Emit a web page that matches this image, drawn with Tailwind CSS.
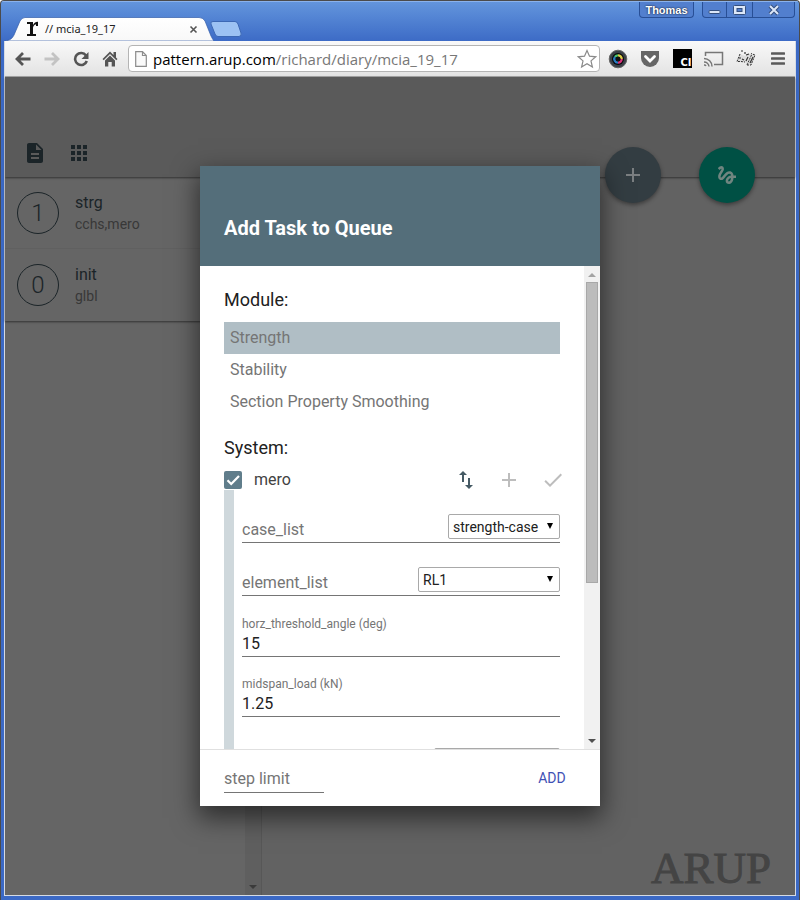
<!DOCTYPE html>
<html lang="en">
<head>
<meta charset="utf-8">
<title>// mcia_19_17</title>
<script src="https://cdn.jsdelivr.net/npm/@tailwindcss/browser@4"></script>
</head>
<body class="font-[Roboto,sans-serif]">
<div class="flex h-screen flex-col overflow-hidden rounded-t border-x border-t border-[#4b4b4b] bg-linear-to-b from-[#6496dd] to-[#3b69c5] to-[42px]">

  <!-- Title bar -->
  <header class="relative flex h-10 shrink-0 items-start justify-between border-t border-[#8ab2ec] pl-1">
    <div class="flex pt-[15px]">
      <div class="relative flex h-6 w-[209px] items-center gap-[6px] pr-4 pl-[21px]">
        <svg class="absolute inset-0" width="209" height="24" viewBox="0 0 209 24"><defs><linearGradient id="tab" x2="0" y2="1"><stop stop-color="#fff"/><stop offset="1" stop-color="#f8f8f8"/></linearGradient></defs><path d="M0 24C5 23 7 22 9 18L15 4Q17 .5 20 .5H194Q198 .5 200 4L206 19Q208 23 209 24Z" fill="url(#tab)" stroke="#345da9" stroke-width=".7"/></svg>
        <svg class="relative shrink-0" width="13" height="16" viewBox="0 0 13 16"><path d="M1 1h6v3C8 2 9 .7 12 .7V5H10V3.2C8.500 3.500 7 5 7 7v6h3v2H1v-2h3V3H1Z" fill="#111"/></svg>
        <span class="relative flex-1 font-['Noto_Sans',sans-serif] text-[11px] leading-4 whitespace-nowrap text-[#222]">// mcia_19_17</span>
        <button aria-label="Close tab" class="relative"><svg width="9" height="9" viewBox="0 0 9 9"><path d="M1.500 1.500l6 6M7.500 1.500l-6 6" stroke="#555" stroke-width="1.600"/></svg></button>
      </div>
      <button aria-label="New tab" class="mt-1 -ml-1 h-4"><svg width="32" height="16" viewBox="0 0 32 16"><path d="M3 .5H25Q27 .5 28 3L31 12Q32 15 29 15.500H8Q6 15.500 5 13L1 3Q0 .5 3 .5Z" fill="#9cc2f3" stroke="#3c68b4"/></svg></button>
    </div>
    <div class="flex h-4 gap-2 pr-1 text-white">
      <button class="w-[55px] rounded-b border border-t-0 border-[#284f96] bg-[#527fce] font-['Liberation_Sans',sans-serif] text-[11px] leading-4 font-bold text-white text-shadow-[0_0_2px_#000]">Thomas</button>
      <div class="flex rounded-b border border-t-0 border-[#284f96] bg-[#527fce]">
        <button aria-label="Minimize" class="grid w-6 place-items-center border-r border-[#284f96]"><svg width="13" height="14" viewBox="0 0 13 14"><rect x="1" y="7.500" width="11" height="3" rx="1" fill="#dce7f8" stroke="#35507f"/></svg></button>
        <button aria-label="Maximize" class="grid w-[26px] place-items-center border-r border-[#284f96]"><svg width="13" height="12" viewBox="0 0 13 12"><rect x=".5" y="1.500" width="12" height="9" rx="1" fill="#dce7f8" stroke="#35507f"/><rect x="4" y="4.500" width="5" height="3" fill="#527fce" stroke="#35507f"/></svg></button>
        <button aria-label="Close" class="grid w-[41px] place-items-center"><svg width="12" height="12" viewBox="0 0 12 12"><path d="M2 2l8 8M10 2l-8 8" stroke="#35507f" stroke-width="4"/><path d="M2 2l8 8M10 2l-8 8" stroke="#dce7f8" stroke-width="2"/></svg></button>
      </div>
    </div>
  </header>

  <div class="mx-[3px] mb-1 flex min-h-0 flex-1 flex-col border-x border-b border-[#d5dbe4]">
    <!-- Browser toolbar -->
    <nav class="flex h-9 shrink-0 items-center border-b border-[#a5a5a5] bg-linear-to-b from-[#f9f9f9] to-[#e3e3e3] pl-[3px]">
      <button aria-label="Back" class="grid w-[29px] place-items-center"><svg width="18" height="16" viewBox="0 0 18 16"><path d="M16.500 8H3M9 2L3 8l6 6" fill="none" stroke="#555" stroke-width="2.800"/></svg></button>
      <button aria-label="Forward" class="grid w-[29px] place-items-center"><svg width="18" height="16" viewBox="0 0 18 16"><path d="M1.500 8H15M9 2l6 6-6 6" fill="none" stroke="#c3c3c3" stroke-width="2.800"/></svg></button>
      <button aria-label="Reload" class="grid w-[29px] place-items-center"><svg width="16" height="16" viewBox="0 0 16 16"><path d="M13 4.500A6 6 0 1 0 13.800 10" fill="none" stroke="#555" stroke-width="2.600"/><path d="M15.500 1v7H8.500Z" fill="#555"/></svg></button>
      <button aria-label="Home" class="grid w-[29px] place-items-center"><svg width="16" height="16" viewBox="0 0 16 16"><path d="M8 .5L.5 8l1.200 1.200L8 3l6.300 6.200 1.200-1.200L14 6.500V1h-2.500v3Z M3 9.500l5-5 5 5v6H9.700V11H6.300v4.500H3Z" fill="#555"/></svg></button>
      <div class="ml-1 flex h-[27px] min-w-0 flex-1 items-center gap-[6px] rounded-sm border border-[#b4b4b4] bg-white px-[6px]">
        <svg class="shrink-0" width="12" height="16" viewBox="0 0 12 16"><path d="M.7.7H7.500L11.300 4.500V15.300H.7ZM7.500.7V4.500h3.800" fill="#fafafa" stroke="#8c8c8c" stroke-width="1.200"/></svg>
        <span class="flex-1 overflow-hidden font-['Open_Sans',sans-serif] text-[15px] leading-6 whitespace-nowrap text-[#777]"><span class="text-black">pattern.arup.com</span>/richard/diary/mcia_19_17</span>
        <button aria-label="Bookmark"><svg class="-mr-1" width="20" height="20" viewBox="0 0 20 20"><path d="M10 1.500l2.500 5.700 6.200.6-4.700 4.100 1.400 6.100L10 14.800 4.600 18 6 11.900 1.300 7.800l6.200-.6Z" fill="#fff" stroke="#8a8a8a" stroke-width="1.200"/></svg></button>
      </div>
      <div class="ml-[2px] flex pr-px">
        <button aria-label="Camera" class="grid w-8 place-items-center"><svg width="20" height="20" viewBox="0 0 20 20"><circle cx="10" cy="10" r="8.800" fill="#3b4148" stroke="#666"/><circle cx="10" cy="10" r="6" fill="#080808"/><g fill="none" stroke-width="2.500"><path d="M7 8A3.600 3.600 0 0 1 10 6.400" stroke="#4bc56b"/><path d="M10 6.400A3.600 3.600 0 0 1 13.600 10" stroke="#ded04a"/><path d="M13.600 10A3.600 3.600 0 0 1 10 13.600" stroke="#db337d"/><path d="M10 13.600A3.600 3.600 0 0 1 7 8" stroke="#287cc5"/></g><circle cx="10" cy="10" r="2.500" fill="#111"/></svg></button>
        <button aria-label="Pocket" class="grid w-8 place-items-center"><svg width="20" height="18" viewBox="0 0 20 18"><path d="M1 1H19V8A9 9 0 0 1 1 8Z" fill="#666"/><path d="M5.500 6.500L10 11l4.500-4.500" fill="none" stroke="#fff" stroke-width="2.800" stroke-linecap="round"/></svg></button>
        <button aria-label="CI" class="grid w-8 place-items-center"><span class="flex h-[19px] w-[19px] items-end justify-end overflow-hidden bg-black font-['DejaVu_Sans',sans-serif] text-[10px] leading-[11px] font-bold text-white">CI</span></button>
        <button aria-label="Cast" class="grid w-8 place-items-center"><svg width="20" height="16" viewBox="0 0 20 16"><path d="M1.500 5V1.500H18.500V13.500H10" fill="none" stroke="#777" stroke-width="1.500"/><path d="M0 14a2 2 0 0 1 2 1M0 11a5 5 0 0 1 5 4.500M0 7.500A8 8 0 0 1 8 15.500" fill="none" stroke="#777" stroke-width="1.500"/></svg></button>
        <button aria-label="Notes" class="grid w-8 place-items-center"><svg width="20" height="18" viewBox="0 0 20 18"><path d="M4 4L1 11.500l5.500-.5L9 12l2 3h4L19 5l-4-1.500-4 1L9 6 6 5Z" fill="#dcdcdc"/><path d="M4 4L1 11.500h4l4 .5M11 15l4.500-10M11 15h4L19 5l-4-1.500" fill="none" stroke="#333" stroke-dasharray="2 1"/><path d="M5 1h2M9 2v2M10 5l3-1M3 8h2M6 9l2 1M10 11l2-4M14 13l3-6" fill="none" stroke="#333" stroke-width="1.200"/></svg></button>
        <button aria-label="Menu" class="grid w-8 place-items-center"><svg width="14" height="13" viewBox="0 0 14 13"><path d="M1 1.500H13M1 6.500H13M1 11.500H13" stroke="#5a5a5a" stroke-width="2.600" stroke-linecap="round"/></svg></button>
      </div>
    </nav>

    <!-- Dimmed page with the modal on top -->
    <div class="relative flex min-h-0 flex-1 flex-col bg-[#626262]">
      <header class="relative z-10 flex items-end gap-1 bg-[#5a5a5a] pt-14 pb-1 pl-[10px] shadow-[0_1px_2px_rgba(0,0,0,0.5)]">
        <button aria-label="Document" class="grid size-10 place-items-center"><svg width="24" height="24" viewBox="0 0 24 24" fill="#1b2428"><path d="M14 2H6c-1.100 0-1.990.9-1.990 2L4 20c0 1.100.89 2 1.990 2H18c1.100 0 2-.9 2-2V8l-6-6zm2 16H8v-2h8v2zm0-4H8v-2h8v2zm-3-5V3.500L18.500 9H13z"/></svg></button>
        <button aria-label="Apps" class="grid size-10 place-items-center"><svg width="24" height="24" viewBox="0 0 24 24" fill="#1b2428"><path d="M4 8h4V4H4v4zm6 12h4v-4h-4v4zm-6 0h4v-4H4v4zm0-6h4v-4H4v4zm6 0h4v-4h-4v4zm6-10v4h4V4h-4zm-6 4h4V4h-4v4zm6 6h4v-4h-4v4zm0 6h4v-4h-4v4z"/></svg></button>
        <div class="absolute right-10 -bottom-[26px] flex gap-[38px]">
          <button aria-label="Add" class="grid size-14 place-items-center rounded-full bg-[#333d42] shadow-[0_2px_4px_rgba(0,0,0,0.4)]"><svg width="24" height="24" viewBox="0 0 24 24" fill="#7b7f81"><path d="M19 13h-6v6h-2v-6H5v-2h6V5h2v6h6v2z"/></svg></button>
          <button aria-label="Draw" class="grid size-14 place-items-center rounded-full bg-[#005044] shadow-[0_2px_4px_rgba(0,0,0,0.4)]"><svg width="24" height="24" viewBox="0 0 24 24" fill="#708580"><path d="M4.590 6.890c.7-.71 1.400-1.350 1.710-1.220.5.2 0 1.030-.3 1.520-.25.42-2.860 3.890-2.860 6.310 0 1.280.48 2.340 1.340 2.980.75.56 1.740.73 2.640.46 1.070-.31 1.950-1.400 3.060-2.770 1.210-1.490 2.830-3.440 4.080-3.440 1.630 0 1.650 1.010 1.760 1.790-3.780.64-5.380 3.670-5.380 5.370 0 1.700 1.440 3.090 3.210 3.090 1.630 0 4.290-1.330 4.690-6.100H21v-2.500h-2.470c-.15-1.650-1.090-4.200-4.030-4.200-2.250 0-4.180 1.910-4.940 2.840-.58.73-2.060 2.480-2.290 2.720-.25.3-.68.84-1.110.84-.45 0-.72-.83-.36-1.920.35-1.090 1.400-2.860 1.850-3.520.78-1.140 1.300-1.920 1.300-3.280C8.950 3.690 7.310 3 6.440 3 5.120 3 3.970 4 3.720 4.250c-.36.36-.66.66-.88.93l1.750 1.710zm9.290 11.660c-.31 0-.74-.26-.74-.72 0-.6.73-2.200 2.870-2.760-.3 2.690-1.430 3.480-2.130 3.480z"/></svg></button>
        </div>
      </header>
      <div class="flex min-h-0 flex-1">
        <aside class="flex w-[257px] border-r border-[#575757] bg-[#656565]">
          <ul class="w-60 self-start shadow-[0_1px_2px_rgba(0,0,0,0.5)]">
            <li class="flex h-[72px] items-center gap-4 border-b border-[#606060] pl-3">
              <span class="grid size-[42px] place-items-center rounded-full border border-[#1b2428] text-2xl font-light text-[#1b2428]">1</span>
              <div><p class="text-base leading-[22px] text-[#1b2428]">strg</p><p class="text-sm leading-5 text-[#383838]">cchs,mero</p></div>
            </li>
            <li class="flex h-[72px] items-center gap-4 pl-3">
              <span class="grid size-[42px] place-items-center rounded-full border border-[#1b2428] text-2xl font-light text-[#1b2428]">0</span>
              <div><p class="text-base leading-[22px] text-[#1b2428]">init</p><p class="text-sm leading-5 text-[#383838]">glbl</p></div>
            </li>
          </ul>
          <div class="flex flex-1 items-end justify-center bg-[#5f5f5f] pb-[6px]"><svg width="8" height="4" viewBox="0 0 8 4"><path d="M0 0h8L4 4z" fill="#3a3a3a"/></svg></div>
        </aside>
        <main class="flex flex-1 items-end justify-end pr-6 pb-[2px]">
          <span class="font-['Liberation_Serif',serif] text-[45px] leading-[50px] text-[#444] [-webkit-text-stroke:1px_#444]">ARUP</span>
        </main>
      </div>

      <div class="absolute inset-0 z-20 flex items-center justify-center">
        <form class="flex h-full max-h-[640px] w-full max-w-[400px] flex-col bg-white shadow-[0_10px_24px_2px_rgba(0,0,0,0.55)]" role="dialog" aria-labelledby="dlg">
          <h1 id="dlg" class="bg-[#546e7a] px-6 pt-12 pb-6 text-xl leading-7 font-bold text-white">Add Task to Queue</h1>
          <div class="flex min-h-0 flex-1">
            <div class="flex min-w-0 flex-1 flex-col overflow-hidden px-6 pt-5">
              <h2 class="mb-2 text-lg leading-7 text-[#212121]">Module:</h2>
              <ul class="text-base leading-8 text-[#757575]">
                <li class="bg-[#b0bec5] px-[6px]">Strength</li>
                <li class="px-[6px]">Stability</li>
                <li class="px-[6px]">Section Property Smoothing</li>
              </ul>
              <h2 class="mt-4 mb-2 text-lg leading-7 text-[#212121]">System:</h2>
              <div class="flex h-5 shrink-0 items-center">
                <label class="relative flex flex-1 items-center gap-3 text-base leading-5 text-[#424242]">
                  <input type="checkbox" checked class="size-[18px] appearance-none rounded-xs bg-[#607d8b]">
                  <svg class="absolute left-0" width="18" height="18" viewBox="0 0 18 18"><path d="M3.500 9.300l3.700 3.700L15 5" fill="none" stroke="#fff" stroke-width="2.200"/></svg>
                  mero
                </label>
                <div class="-my-[10px] -mr-[13px] flex gap-1">
                  <button type="button" aria-label="Reorder" class="grid size-10 place-items-center"><svg width="24" height="24" viewBox="0 0 24 24" fill="#455a64"><path d="M17 17.010V10h-2v7.010h-3L16 21l4-3.990h-3zM10 3L6 6.990h3V14h2V6.990h3L10 3z"/></svg></button>
                  <button type="button" aria-label="Add step" class="grid size-10 place-items-center"><svg width="24" height="24" viewBox="0 0 24 24" fill="#bdbdbd"><path d="M19 13h-6v6h-2v-6H5v-2h6V5h2v6h6v2z"/></svg></button>
                  <button type="button" aria-label="Confirm" class="grid size-10 place-items-center"><svg width="24" height="24" viewBox="0 0 24 24" fill="#bdbdbd"><path d="M9 16.170L4.830 12l-1.420 1.410L9 19 21 7l-1.410-1.410z"/></svg></button>
                </div>
              </div>
              <div class="flex shrink-0 flex-col border-l-10 border-[#cfd8dc] pl-2 text-base leading-6">
                <div class="flex h-[53px] items-end justify-between border-b border-[#757575]">
                  <label for="cases" class="text-[#757575]">case_list</label>
                  <div class="relative mb-[3px] h-[25px] w-28">
                    <select id="cases" class="size-full appearance-none rounded-xs border border-[#a9a9a9] bg-white pl-1 text-sm leading-5 text-[#212121]"><option>strength-case</option></select>
                    <svg class="pointer-events-none absolute top-2 right-[6px]" width="8" height="8" viewBox="0 0 8 8"><path d="M1 1h6L4 7z"/></svg>
                  </div>
                </div>
                <div class="flex h-[53px] items-end justify-between border-b border-[#757575]">
                  <label for="elements" class="text-[#757575]">element_list</label>
                  <div class="relative mb-[3px] h-[25px] w-[142px]">
                    <select id="elements" class="size-full appearance-none rounded-xs border border-[#a9a9a9] bg-white pl-1 text-sm leading-5 text-[#212121]"><option>RL1</option></select>
                    <svg class="pointer-events-none absolute top-2 right-[6px]" width="8" height="8" viewBox="0 0 8 8"><path d="M1 1h6L4 7z"/></svg>
                  </div>
                </div>
                <div class="flex h-[61px] flex-col justify-end border-b border-[#757575]">
                  <label for="angle" class="text-xs leading-4 text-[#757575]">horz_threshold_angle (deg)</label>
                  <input id="angle" value="15" class="h-6 w-full text-[#212121] outline-none">
                </div>
                <div class="flex h-[60px] flex-col justify-end border-b border-[#757575]">
                  <label for="load" class="text-xs leading-4 text-[#757575]">midspan_load (kN)</label>
                  <input id="load" value="1.25" class="h-6 w-full text-[#212121] outline-none">
                </div>
                <div class="mt-[7px] flex h-[53px] items-end justify-end border-b border-[#757575]">
                  <select aria-label="Load case" class="mb-[3px] h-[25px] w-[126px] appearance-none rounded-xs border border-[#a9a9a9] bg-white"><option></option></select>
                </div>
              </div>
            </div>
            <div class="flex w-4 flex-col items-center bg-[#f1f1f1]" aria-hidden="true">
              <svg class="mt-[7px] mb-[5px] shrink-0" width="8" height="4" viewBox="0 0 8 4"><path d="M0 4h8L4 0z" fill="#a3a3a3"/></svg>
              <div class="h-[301px] w-3 border border-[#a8a8a8] bg-[#bcbcbc]"></div>
              <svg class="mt-auto mb-[6px] shrink-0" width="8" height="4" viewBox="0 0 8 4"><path d="M0 0h8L4 4z" fill="#505050"/></svg>
            </div>
          </div>
          <div class="flex h-[57px] shrink-0 items-center justify-between border-t border-[#e0e0e0] pr-2 pl-6">
            <input aria-label="step limit" placeholder="step limit" class="mt-1 h-[26px] w-[100px] border-b border-[#757575] pb-[2px] text-base leading-6 outline-none placeholder:text-[#757575]">
            <button type="submit" class="h-9 w-20 text-sm leading-9 text-[#3f51b5]">ADD</button>
          </div>
        </form>
      </div>
    </div>
  </div>
</div>
</body>
</html>
